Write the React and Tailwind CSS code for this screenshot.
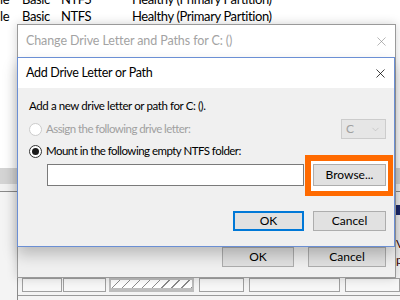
import { X, ChevronDown } from 'lucide-react';

function Radio({ checked, disabled }) {
  return (
    <span className={`flex h-[13px] w-[13px] shrink-0 items-center justify-center rounded-full border bg-white ${disabled ? 'border-[#cccccc] bg-[#f0f0f0]' : 'border-[#333333]'}`}>
      {checked && <span className="h-[7px] w-[7px] rounded-full bg-[#1a1a1a]" />}
    </span>
  );
}

function Btn({ children, primary, className = '' }) {
  return (
    <div className={`flex h-[20px] items-center justify-center bg-[#e1e1e1] text-[12px] ${primary ? 'border-2 border-[#0078d7]' : 'border border-[#adadad]'} ${className}`}>
      {children}
    </div>
  );
}

export default function App() {
  return (
    <div className="relative h-[300px] w-[400px] overflow-hidden bg-white font-['Lato',sans-serif] text-black">
      {/* disk management behind the dialogs */}
      <div className="flex h-full flex-col">
        <div className="-mt-[9px] text-[13px] tracking-[-0.4px]">
          {[0, 1].map(i => (
            <div key={i} className="flex h-[17px] items-center whitespace-nowrap">
              <span className="w-[22px]">le</span>
              <span className="w-[39px]">Basic</span>
              <span className="w-[71px]">NTFS</span>
              <span>Healthy (Primary Partition)</span>
            </div>
          ))}
        </div>
        <div className="h-[143px]" />
        <div className="h-[16px] bg-[#d4d4d4]" />
        <div className="h-[7px] bg-[#f2f2f2]" />
        <div className="h-px bg-[#8a8a8a]" />
        <div className="flex flex-1 flex-col bg-[#f4f4f4]">
          <div className="h-[13px]" />
          <div className="ml-[380px] h-[10px] bg-[#1d2b6e]" />
          <div className="h-[21px]" />
          <div className="pl-[396px] text-[12px] leading-[16px] text-[#3a0000]">
            <div>Vo</div>
            <div>pr</div>
          </div>
          <div className="ml-[17px] flex flex-1 flex-col border-l border-[#8a8a8a]">
            <div className="h-[10px]" />
            <div className="flex h-[14px] gap-[1px] pl-[4px]">
              <div className="w-[40px] border border-[#a0a0a0] bg-[#f7f7f7]" />
              <div className="w-[43px] border border-[#a0a0a0] bg-[#f7f7f7]" />
              <div className="ml-[2px] w-[85px] border-[2px] border-b-[4px] border-[#bdbdbd] bg-[repeating-linear-gradient(135deg,#ffffff_0px,#ffffff_6px,#8a8a8a_6px,#8a8a8a_7px)]" />
              <div className="ml-[4px] w-[45px] border border-[#a0a0a0] bg-[#f7f7f7]" />
              <div className="ml-[4px] w-[91px] border border-[#a0a0a0] bg-[#f7f7f7]" />
              <div className="ml-[4px] flex-1 border border-[#a0a0a0] bg-[#f7f7f7]" />
            </div>
            <div className="h-[3px]" />
            <div className="h-px bg-[#9a9a9a]" />
          </div>
        </div>
      </div>

      {/* outer dialog */}
      <div className="absolute left-[17px] top-[24px] flex h-[254px] w-[379px] flex-col border border-[#9a9a9a] bg-[#f0f0f0] shadow-[0_0_10px_rgba(0,0,0,0.18)]">
        <div className="flex h-[33px] items-center justify-between bg-white pl-[8px] pr-[6px]">
          <span className="text-[12.5px] tracking-[-0.1px] text-[#a3a3a3]">Change Drive Letter and Paths for C: ()</span>
          <X size={15} strokeWidth={1} className="text-[#8a8a8a]" />
        </div>
        <div className="h-[189px]" />
        <div className="flex justify-end gap-[14px] pr-[9px]">
          <Btn className="w-[72px]">OK</Btn>
          <Btn className="w-[78px]">Cancel</Btn>
        </div>
      </div>

      {/* inner dialog */}
      <div className="absolute left-[17px] top-[57px] flex h-[190px] w-[378px] flex-col border border-[#6b8fd4] bg-[#f0f0f0] shadow-[0_8px_14px_rgba(0,0,0,0.22)]">
        <div className="flex h-[30px] items-center justify-between bg-white pl-[8px] pr-[6px]">
          <span className="text-[12.5px] tracking-[-0.3px]">Add Drive Letter or Path</span>
          <X size={15} strokeWidth={1.2} className="text-black" />
        </div>
        <div className="flex flex-col pl-[11px] pr-[8px] pt-[10px] text-[11.5px]">
          <div className="h-[16px] leading-[16px] tracking-[-0.4px]">Add a new drive letter or path for C: ().</div>
          <div className="mt-[5px] flex h-[20px] items-center justify-between">
            <div className="flex items-center gap-[4px] tracking-[-0.55px] text-[#a0a0a0]">
              <Radio disabled />
              <span>Assign the following drive letter:</span>
            </div>
            <div className="flex h-[20px] w-[45px] items-center justify-between border border-[#cccccc] bg-[#e6e6e6] pl-[4px] pr-[4px] text-[12px] text-[#a0a0a0]">
              <span>C</span>
              <ChevronDown size={11} strokeWidth={1.2} className="text-[#b0b0b0]" />
            </div>
          </div>
          <div className="mt-[4px] flex h-[16px] items-center gap-[4px] tracking-[-0.52px]">
            <Radio checked />
            <span>Mount in the following empty NTFS folder:</span>
          </div>
          <div className="mt-[5px] flex h-[22px]">
            <div className="ml-[18px] flex-1 border border-[#7a7a7a] bg-white" />
            <div className="relative ml-[9px] w-[73px]">
              <div className="absolute -bottom-[10px] -left-[8px] -right-[7px] -top-[9px] border-b-[5px] border-l-[6px] border-r-[5px] border-t-[6px] border-[#ff6a00] bg-white" />
              <div className="relative flex h-[22px] items-center justify-center border border-[#adadad] bg-[#e1e1e1] text-[12px]">Browse...</div>
            </div>
          </div>
          <div className="mt-[25px] flex justify-end gap-[9px]">
            <Btn primary className="w-[71px]">OK</Btn>
            <Btn className="w-[73px]">Cancel</Btn>
          </div>
        </div>
      </div>
    </div>
  );
}
